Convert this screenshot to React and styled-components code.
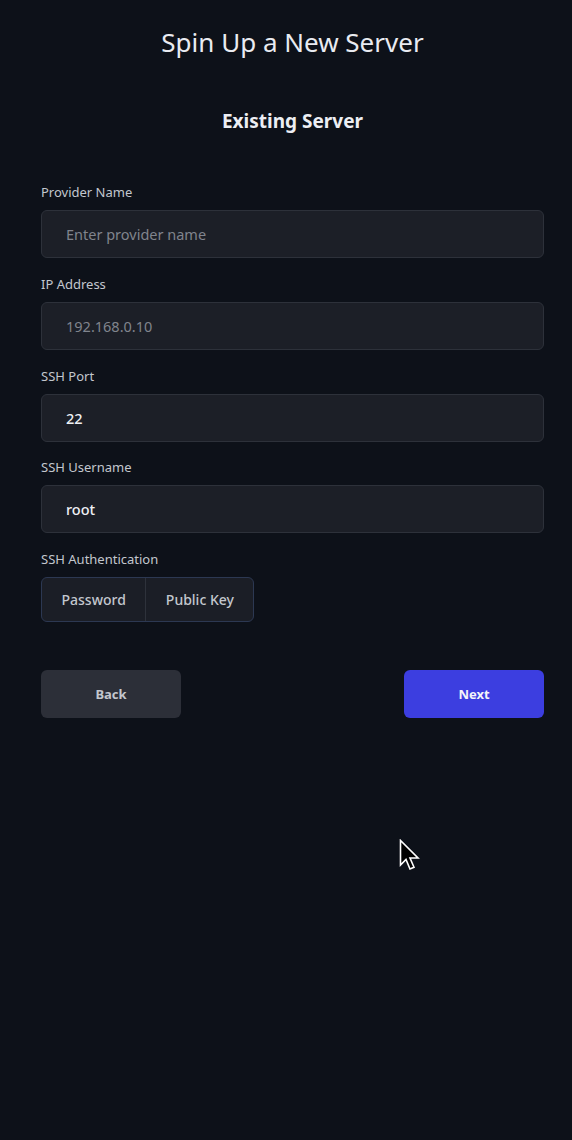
import React from "react";
import styled, { createGlobalStyle } from "styled-components";

const Global = createGlobalStyle`
  html, body { margin: 0; padding: 0; background: #0d1119; }
  body { font-family: "Noto Sans", "Open Sans", sans-serif; min-height: 1140px; }
  * { box-sizing: border-box; }
`;

const Page = styled.main`
  position: relative;
  min-height: 1140px;
  padding: 25px 28px 0 41px;
`;

const Container = styled.div`
  width: 503px;
  display: flex;
  flex-direction: column;
`;

const Title = styled.h1`
  margin: 0;
  text-align: center;
  font-size: 26px;
  line-height: 34px;
  font-weight: 400;
  color: #e9ebf1;
`;

const Subtitle = styled.h2`
  margin: 49px 0 0;
  text-align: center;
  font-size: 19px;
  line-height: 26px;
  font-weight: 700;
  color: #eceef3;
`;

const Form = styled.form`
  margin-top: 49px;
  display: flex;
  flex-direction: column;
  gap: 16.75px;
`;

const Field = styled.div`
  display: flex;
  flex-direction: column;
`;

const Label = styled.label`
  font-size: 13px;
  line-height: 18px;
  color: #c3c7ce;
  margin-bottom: 9px;
`;

const Input = styled.input`
  height: 48px;
  width: 100%;
  padding: 0 24px;
  border-radius: 6px;
  border: 1px solid #2d313a;
  background: #1c1f27;
  color: #eef0f4;
  font-family: inherit;
  font-size: 14.5px;
  font-weight: ${(p) => (p.$strong ? 500 : 400)};
  outline: none;
  &::placeholder { color: #80848d; }
`;

const Segmented = styled.div`
  display: inline-flex;
  align-self: flex-start;
  height: 45px;
  border: 1px solid #2c3852;
  border-radius: 6px;
  background: #1b1e26;
  overflow: hidden;
`;

const Segment = styled.button`
  border: none;
  background: transparent;
  color: #c3c7ce;
  font-family: inherit;
  font-size: 14px;
  font-weight: 500;
  padding: 0 ${(p) => p.$pad}px;
  & + & { border-left: 1px solid #2e323b; }
`;

const Actions = styled.div`
  margin-top: 48px;
  display: flex;
  justify-content: space-between;
`;

const Button = styled.button`
  width: 140px;
  height: 48px;
  border: none;
  border-radius: 6px;
  font-family: inherit;
  font-size: 13px;
  font-weight: 700;
  background: ${(p) => (p.$primary ? "#3c3ee0" : "#2c2f38")};
  color: ${(p) => (p.$primary ? "#f3f4fa" : "#c4c7cd")};
`;

const Cursor = styled.svg`
  position: absolute;
  left: 399px;
  top: 839px;
`;

export default function App() {
  return (
    <>
      <Global />
      <Page>
        <Container>
          <Title>Spin Up a New Server</Title>
          <Subtitle>Existing Server</Subtitle>
          <Form onSubmit={(e) => e.preventDefault()}>
            <Field>
              <Label>Provider Name</Label>
              <Input placeholder="Enter provider name" />
            </Field>
            <Field>
              <Label>IP Address</Label>
              <Input placeholder="192.168.0.10" />
            </Field>
            <Field>
              <Label>SSH Port</Label>
              <Input defaultValue="22" $strong />
            </Field>
            <Field>
              <Label>SSH Username</Label>
              <Input defaultValue="root" $strong />
            </Field>
            <Field>
              <Label>SSH Authentication</Label>
              <Segmented>
                <Segment type="button" $pad={19.5}>Password</Segment>
                <Segment type="button" $pad={19.5}>Public Key</Segment>
              </Segmented>
            </Field>
          </Form>
          <Actions>
            <Button type="button">Back</Button>
            <Button type="button" $primary>Next</Button>
          </Actions>
        </Container>
        <Cursor width="24" height="38" viewBox="0 0 24 38">
          <path d="M1.5 1.5 L1.5 26 L7 20.5 L11 30 L15 28.3 L11 19 L19 19 Z" fill="#000" stroke="#fff" strokeWidth="1.6" strokeLinejoin="miter" />
        </Cursor>
      </Page>
    </>
  );
}
